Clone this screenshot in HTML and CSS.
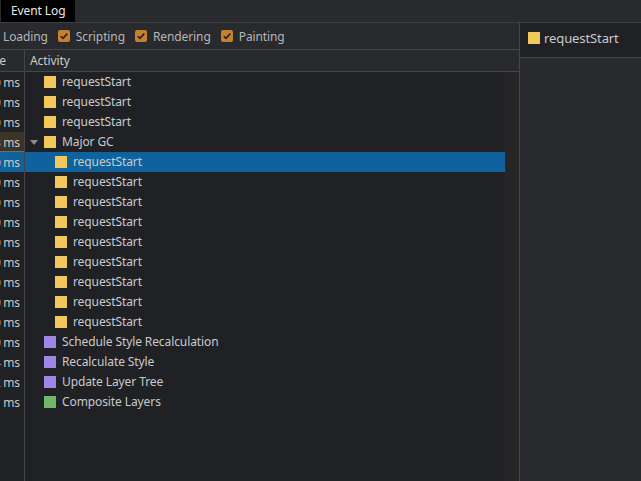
FILE: index.html
```html
<!DOCTYPE html>
<html>
<head>
<meta charset="utf-8">
<link rel="stylesheet" href="styles.css">
</head>
<body>
<div class="tabbar"><div class="tab">Event Log</div></div>
<div class="main">
  <div class="left">
    <div class="toolbar">
      <span class="label">Loading</span>
      <span class="cb"><svg width="12" height="12" viewBox="0 0 12 12"><rect x="0" y="0" width="12" height="12" rx="2" fill="#c8802f"/><path d="M2.8 6.2 L5 8.4 L9.3 3.6" fill="none" stroke="#202124" stroke-width="1.6"/></svg></span>
      <span class="label">Scripting</span>
      <span class="cb"><svg width="12" height="12" viewBox="0 0 12 12"><rect x="0" y="0" width="12" height="12" rx="2" fill="#c8802f"/><path d="M2.8 6.2 L5 8.4 L9.3 3.6" fill="none" stroke="#202124" stroke-width="1.6"/></svg></span>
      <span class="label">Rendering</span>
      <span class="cb"><svg width="12" height="12" viewBox="0 0 12 12"><rect x="0" y="0" width="12" height="12" rx="2" fill="#c8802f"/><path d="M2.8 6.2 L5 8.4 L9.3 3.6" fill="none" stroke="#202124" stroke-width="1.6"/></svg></span>
      <span class="label">Painting</span>
    </div>
    <div class="table">
      <div class="thead">
        <div class="tcell time head"><span>Self Time</span></div>
        <div class="acell">Activity</div>
      </div>
      <div class="tbody">
        <div class="rows">
          <div class="row"><div class="tcell time"><span>0.0 ms</span></div><div class="acell l1"><i class="sq y"></i><span class="t">requestStart</span></div></div>
          <div class="row"><div class="tcell time"><span>0.0 ms</span></div><div class="acell l1"><i class="sq y"></i><span class="t">requestStart</span></div></div>
          <div class="row"><div class="tcell time"><span>0.0 ms</span></div><div class="acell l1"><i class="sq y"></i><span class="t">requestStart</span></div></div>
          <div class="row"><div class="tcell time hl"><span>3 ms</span></div><div class="acell l1"><i class="tri"></i><i class="sq y"></i><span class="t">Major GC</span></div></div>
          <div class="row sel"><div class="tcell time"><span>0.0 ms</span></div><div class="acell l2"><i class="sq y"></i><span class="t">requestStart</span></div></div>
          <div class="row"><div class="tcell time"><span>0.0 ms</span></div><div class="acell l2"><i class="sq y"></i><span class="t">requestStart</span></div></div>
          <div class="row"><div class="tcell time"><span>0.0 ms</span></div><div class="acell l2"><i class="sq y"></i><span class="t">requestStart</span></div></div>
          <div class="row"><div class="tcell time"><span>0.0 ms</span></div><div class="acell l2"><i class="sq y"></i><span class="t">requestStart</span></div></div>
          <div class="row"><div class="tcell time"><span>0.0 ms</span></div><div class="acell l2"><i class="sq y"></i><span class="t">requestStart</span></div></div>
          <div class="row"><div class="tcell time"><span>0.0 ms</span></div><div class="acell l2"><i class="sq y"></i><span class="t">requestStart</span></div></div>
          <div class="row"><div class="tcell time"><span>0.0 ms</span></div><div class="acell l2"><i class="sq y"></i><span class="t">requestStart</span></div></div>
          <div class="row"><div class="tcell time"><span>0.0 ms</span></div><div class="acell l2"><i class="sq y"></i><span class="t">requestStart</span></div></div>
          <div class="row"><div class="tcell time"><span>0.0 ms</span></div><div class="acell l2"><i class="sq y"></i><span class="t">requestStart</span></div></div>
          <div class="row"><div class="tcell time"><span>0.0 ms</span></div><div class="acell l1"><i class="sq p"></i><span class="t">Schedule Style Recalculation</span></div></div>
          <div class="row"><div class="tcell time"><span>0.4 ms</span></div><div class="acell l1"><i class="sq p"></i><span class="t">Recalculate Style</span></div></div>
          <div class="row"><div class="tcell time"><span>0.2 ms</span></div><div class="acell l1"><i class="sq p"></i><span class="t">Update Layer Tree</span></div></div>
          <div class="row"><div class="tcell time"><span>1 ms</span></div><div class="acell l1"><i class="sq g"></i><span class="t">Composite Layers</span></div></div>
          <div class="row filler"><div class="tcell time"></div><div class="acell"></div></div>
        </div>
        <div class="scroll"></div>
      </div>
    </div>
  </div>
  <div class="right">
    <div class="detail"><i class="sq y"></i>requestStart</div>
    <div class="rest"></div>
  </div>
</div>
</body>
</html>
```
FILE: styles.css
```css
html, body {
  margin: 0;
  padding: 0;
  height: 100%;
  overflow: hidden;
}
body {
  background: #292a2d;
  color: #c9cacb;
  font-family: "Noto Sans", "DejaVu Sans", sans-serif;
  font-size: 12px;
  letter-spacing: -0.1px;
  display: flex;
  flex-direction: column;
}
.tabbar {
  height: 22px;
  border-bottom: 1px solid #3d3e41;
  display: flex;
  flex: none;
}
.tab {
  background: #000;
  color: #e8e8e8;
  margin-left: 1px;
  padding: 0 10px;
  line-height: 21px;
  height: 22px;
}
.main {
  flex: 1;
  display: flex;
  min-height: 0;
}
.left {
  width: 519px;
  border-right: 1px solid #45464a;
  display: flex;
  flex-direction: column;
}
.toolbar {
  height: 26px;
  border-bottom: 1px solid #45464a;
  display: flex;
  align-items: center;
  flex: none;
  padding-left: 3px;
}
.label {
  color: #b4b5b7;
  margin-right: 10px;
}
.cb {
  display: flex;
  margin-right: 6px;
}
.table {
  flex: 1;
  display: flex;
  flex-direction: column;
  min-height: 0;
}
.thead {
  height: 21px;
  border-bottom: 1px solid #45464a;
  display: flex;
  flex: none;
}
.tcell {
  width: 25px;
  flex: none;
  border-right: 1px solid #45464a;
  box-sizing: border-box;
  display: flex;
  justify-content: flex-end;
  align-items: center;
  overflow: hidden;
  white-space: nowrap;
  padding-right: 4px;
  word-spacing: -0.5px;
}
.tcell.head {
  padding-right: 18px;
  word-spacing: 0;
}
.acell {
  flex: 1;
  display: flex;
  align-items: center;
  white-space: nowrap;
  padding-left: 5px;
}
.t {
  margin-bottom: 2px;
}
.tbody {
  flex: 1;
  display: flex;
  background: #202124;
  min-height: 0;
}
.rows {
  flex: 1;
  display: flex;
  flex-direction: column;
}
.row {
  height: 20px;
  display: flex;
  flex: none;
}
.row.filler {
  flex: 1;
}
.row.sel {
  background: #0f629c;
}
.tcell.hl {
  background: #3b3529;
  box-shadow: inset 0 -1px 0 #8a6d2e;
}
.acell.l1 {
  padding-left: 19px;
}
.acell.l2 {
  padding-left: 30px;
}
.sq {
  width: 12px;
  height: 12px;
  margin-right: 6px;
  flex: none;
}
.sq.y { background: #f2c75c; }
.sq.p { background: #9e85e6; }
.sq.g { background: #72b66b; }
.tri {
  width: 0;
  height: 0;
  border-left: 4px solid transparent;
  border-right: 4px solid transparent;
  border-top: 5px solid #8c8d90;
  margin-left: -14px;
  margin-right: 6px;
}
.scroll {
  width: 13px;
  background: #252526;
  border-left: 1px solid #2a2a2c;
}
.right {
  flex: 1;
  display: flex;
  flex-direction: column;
}
.detail {
  height: 35px;
  box-sizing: border-box;
  background: #202124;
  border-bottom: 1px solid #45464a;
  display: flex;
  align-items: flex-start;
  padding: 9px 0 0 8px;
  font-size: 13px;
  line-height: 12px;
}
.detail .sq {
  margin-right: 4px;
}
.rest {
  flex: 1;
}
```
